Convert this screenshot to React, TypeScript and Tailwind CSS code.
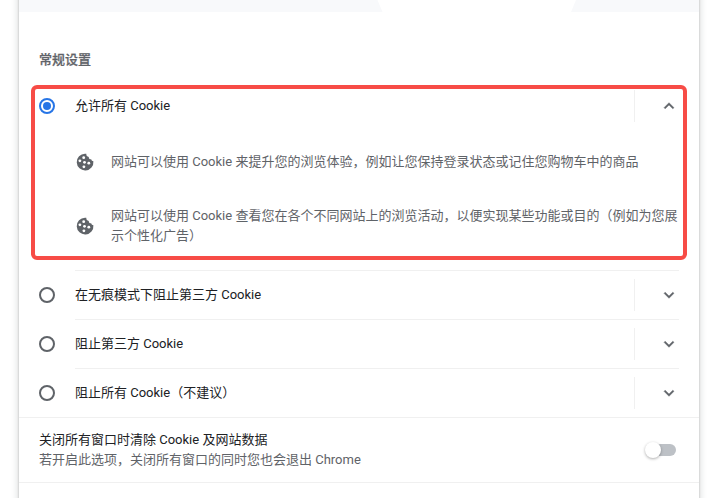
import React from "react";

function Radio({ checked = false }: { checked?: boolean }) {
  return (
    <span
      className={
        "flex size-4 shrink-0 items-center justify-center rounded-full border-2 " +
        (checked ? "border-[#2775e6]" : "border-[#5f6368]")
      }
    >
      {checked && <span className="size-2 rounded-full bg-[#2775e6]" />}
    </span>
  );
}

function Chevron({ up = false }: { up?: boolean }) {
  return (
    <svg viewBox="0 0 24 24" className="size-5" fill="#5f6368" stroke="#5f6368" strokeWidth="0.5">
      {up ? (
        <path d="M12 8l-6 6 1.41 1.41L12 10.83l4.59 4.58L18 14z" />
      ) : (
        <path d="M16.59 8.59L12 13.17 7.41 8.59 6 10l6 6 6-6z" />
      )}
    </svg>
  );
}

function CookieIcon() {
  return (
    <svg viewBox="0 0 20 20" className="size-5 shrink-0">
      <path
        fill="#5f6368"
        d="M10 1.7A8.35 8.35 0 1 0 18.4 9.2C17.4 9.2 16.4 8.5 16.2 7.3C14.7 7.4 13.6 6.4 13.8 4.9C12.2 4.8 11.1 3.5 11.3 1.75Q10.6 1.65 10 1.7Z"
      />
      <g fill="#fff">
        <circle cx="8.7" cy="5.7" r="1.4" />
        <circle cx="4.9" cy="8.8" r="1.4" />
        <circle cx="9.5" cy="10.3" r="1.4" />
        <circle cx="13.8" cy="11.2" r="1.4" />
        <circle cx="8.9" cy="14.8" r="1.4" />
      </g>
    </svg>
  );
}

function OptionRow({ label, checked = false }: { label: string; checked?: boolean }) {
  return (
    <div className="flex h-12 items-center">
      <Radio checked={checked} />
      <span className="ml-5 flex-1 text-[#202124]">{label}</span>
      <span className="h-8 w-px bg-[#f0f0f0]" />
      <span className="ml-6 flex">
        <Chevron up={checked} />
      </span>
    </div>
  );
}

export default function App() {
  return (
    <div className="h-[498px] w-[728px] overflow-hidden bg-white pl-[19px] font-['Roboto','Noto_Sans_CJK_SC',sans-serif] text-[13px] leading-5">
      <main className="-mt-5 h-[540px] w-[680px] bg-white pt-5 shadow-[0_1px_2px_rgba(60,64,67,0.3),0_2px_6px_2px_rgba(60,64,67,0.15)]">
        <svg viewBox="0 0 680 12" className="block h-3 w-full" fill="#f8f9fb">
          <path d="M0 0H358.5L363.5 12H0zM557 0H680V12H552z" />
        </svg>

        <h2 className="ml-5 mt-[38px] h-5 font-medium text-[#5f6368] [-webkit-text-stroke:0.25px_#5f6368]">
          常规设置
        </h2>

        <section className="ml-3 mt-[15px] h-[175px] w-[656px] rounded-[6px] border-4 border-[#f74c46] pl-1">
          <div className="-mt-[7px] w-[640px]">
            <OptionRow label="允许所有 Cookie" checked />
          </div>
          <div className="ml-9 mt-[22px] flex h-5 items-center text-[#5f6368]">
            <CookieIcon />
            <p className="ml-4 whitespace-nowrap">
              网站可以使用 Cookie 来提升您的浏览体验，例如让您保持登录状态或记住您购物车中的商品
            </p>
          </div>
          <div className="ml-9 mt-[34px] flex h-10 items-center text-[#5f6368]">
            <CookieIcon />
            <p className="ml-4 whitespace-nowrap">
              网站可以使用 Cookie 查看您在各个不同网站上的浏览活动，以便实现某些功能或目的（例如为您展
              <br />
              示个性化广告）
            </p>
          </div>
        </section>

        <div className="mt-[10px] pl-5 pr-5">
          <div className="ml-9 h-px bg-[#f0f0f0]" />
          <OptionRow label="在无痕模式下阻止第三方 Cookie" />
          <div className="ml-9 h-px bg-[#f0f0f0]" />
          <OptionRow label="阻止第三方 Cookie" />
          <div className="ml-9 h-px bg-[#f0f0f0]" />
          <OptionRow label="阻止所有 Cookie（不建议）" />
        </div>

        <div className="flex h-[66px] items-center border-y border-[#f0f0f0] pl-5 pr-[23px]">
          <div className="flex-1">
            <p className="text-[#202124]">关闭所有窗口时清除 Cookie 及网站数据</p>
            <p className="text-[#5f6368]">若开启此选项，关闭所有窗口的同时您也会退出 Chrome</p>
          </div>
          <span className="flex h-3 w-[30px] items-center rounded-full bg-[#bdc1c6]">
            <span className="-ml-[1px] size-4 shrink-0 rounded-full bg-white shadow-[0_1px_3px_rgba(0,0,0,0.32)]" />
          </span>
        </div>
      </main>
    </div>
  );
}
